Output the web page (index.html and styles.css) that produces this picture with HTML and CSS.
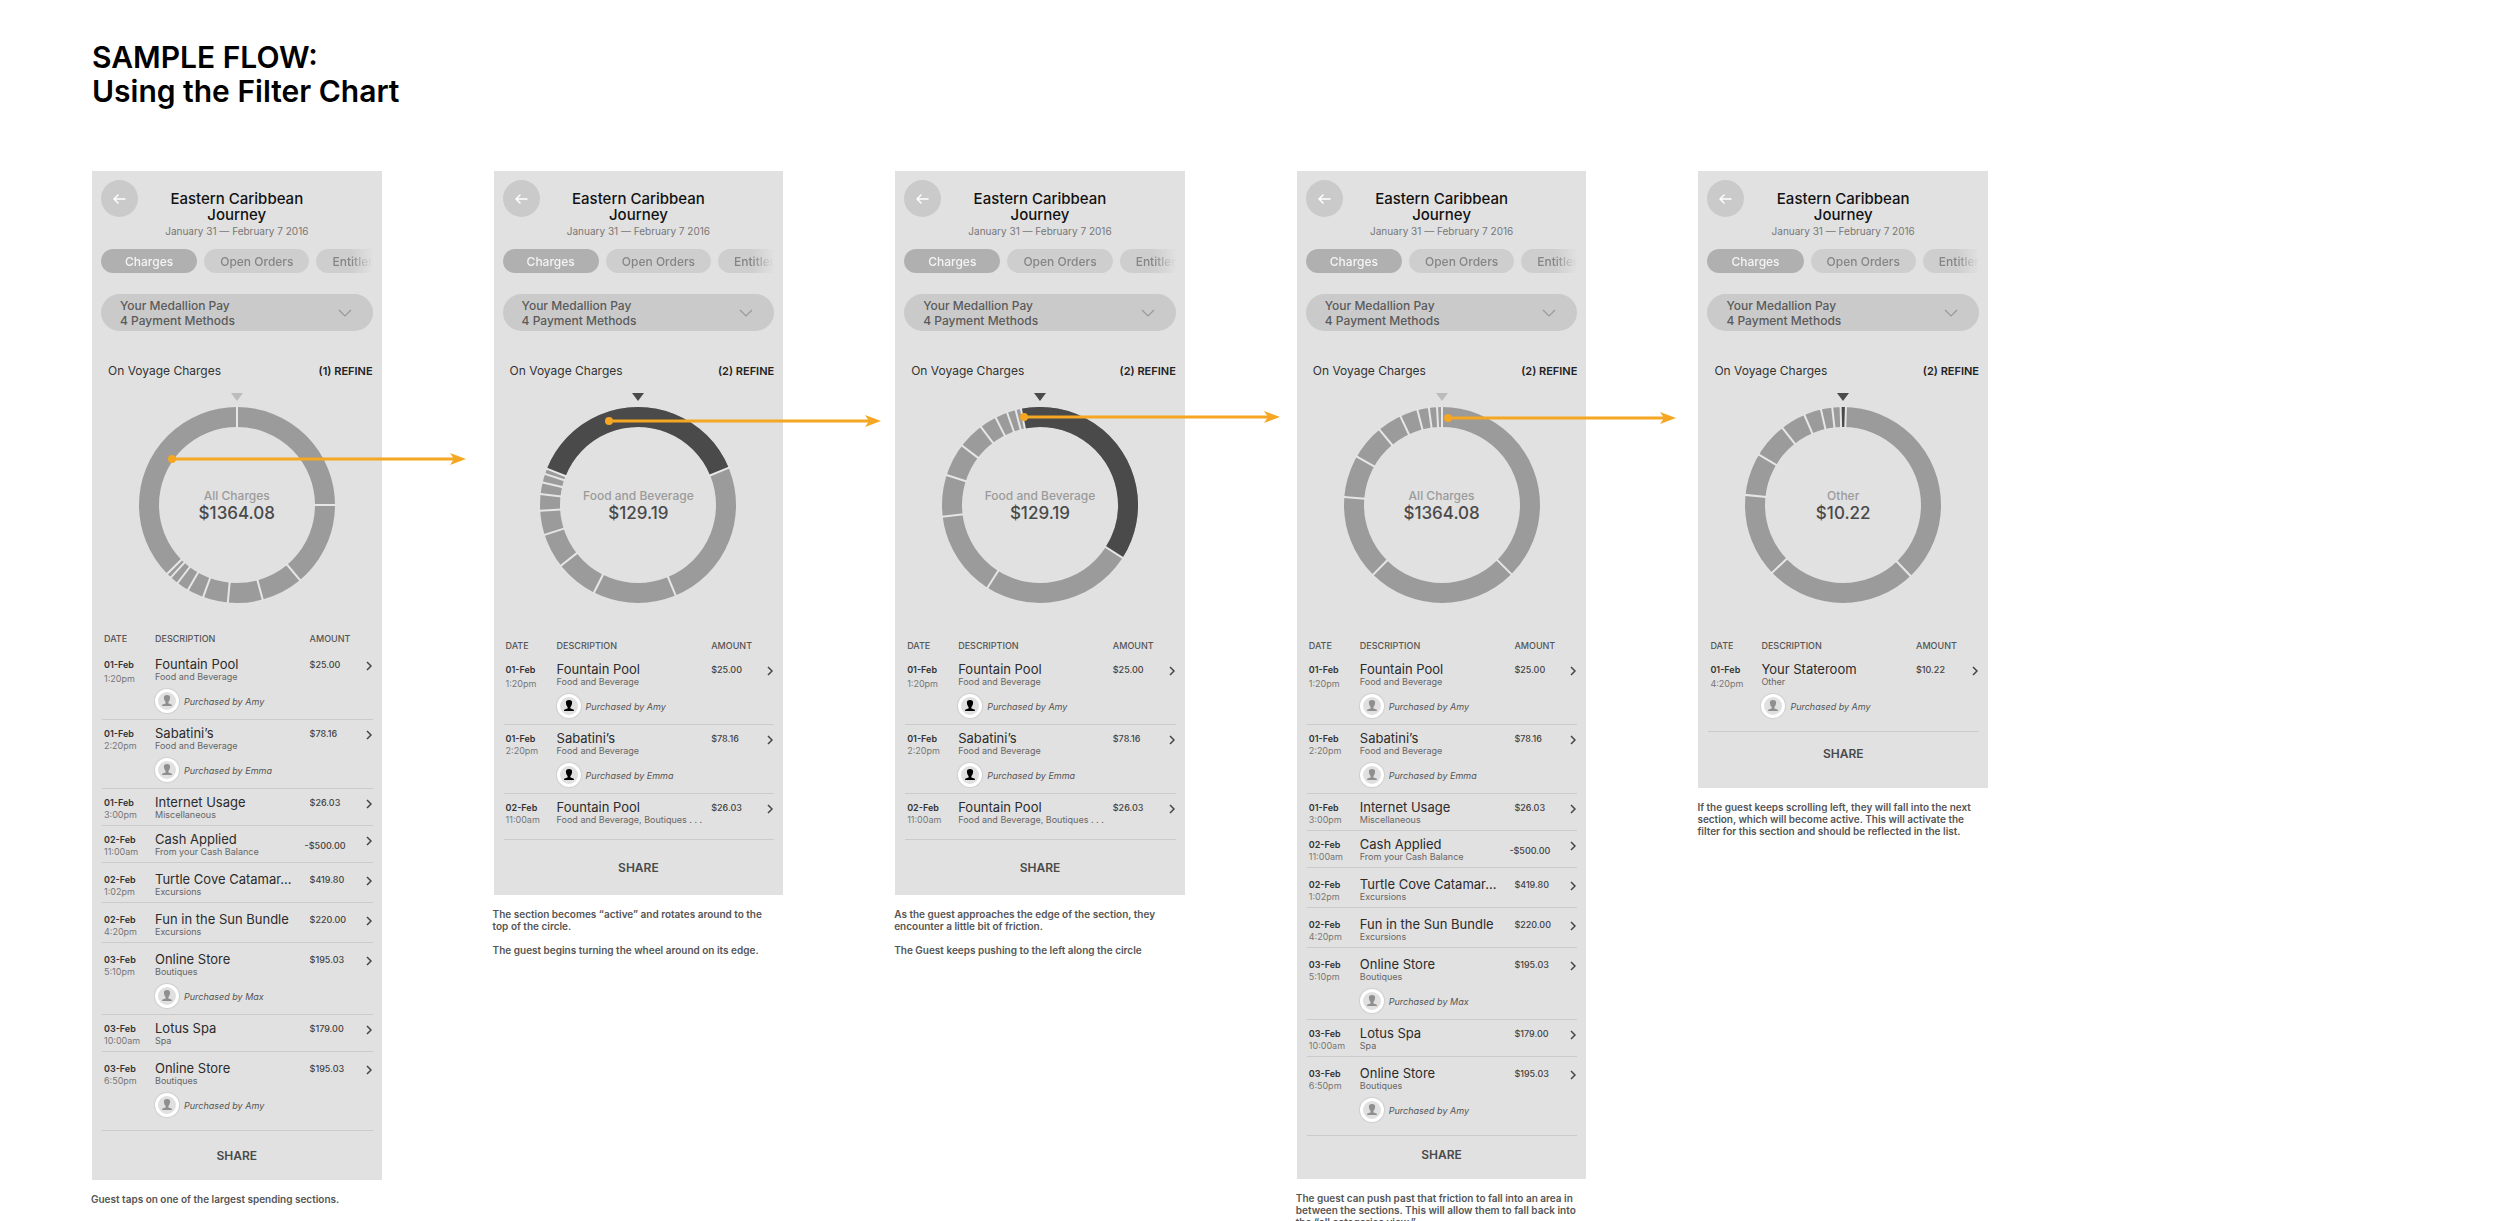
FILE: index.html
```html
<!DOCTYPE html>
<html lang="en">

<head>
    <meta charset="UTF-8">
    <meta name="viewport" content="width=device-width, initial-scale=1.0">
    <title>Sample Flow: Using the Filter Chart</title>
    <link rel="stylesheet" href="styles.css">
</head>

<body>
    <h1>SAMPLE FLOW:<br>Using the Filter Chart</h1>

    <main id="board"></main>

    <script src="flow.js"></script>
</body>

</html>
```

FILE: styles.css
```css
* {
    box-sizing: border-box;
}

html {
    scrollbar-width: none;
}

body {
    margin: 0;
    padding: 40px 512px 0 92px;
    background-color: #fff;
    color: #4a4a4a;
    font-family: Inter, "Liberation Sans", sans-serif;
}

h1 {
    margin: 0 0 63px;
    color: #000;
    font-size: 30px;
    font-weight: 600;
    line-height: 34px;
}

button {
    margin: 0;
    padding: 0;
    border: none;
    background: none;
    color: inherit;
    font-family: inherit;
    cursor: pointer;
}

svg {
    display: block;
}

#board {
    display: grid;
    grid-template-columns: repeat(5, minmax(0, 1fr));
    column-gap: 112px;
    align-items: start;
}

.card {
    position: relative;
    padding: 9px 9px 0;
    background-color: #e1e1e1;
}

/* Card header */
.card-header {
    display: grid;
    grid-template-columns: 37px 1fr 37px;
    margin-bottom: 10px;
}

.back {
    display: flex;
    align-items: center;
    justify-content: center;
    width: 37px;
    height: 37px;
    border-radius: 50%;
    background-color: #cacaca;
}

.trip {
    padding-top: 11px;
    text-align: center;
    white-space: nowrap;
}

.trip h2 {
    margin: 0;
    color: #111;
    font-size: 15px;
    font-weight: 500;
    line-height: 16px;
}

.trip p {
    margin: 0;
    color: #777;
    font-size: 10px;
    line-height: 16px;
}

.tabs {
    display: flex;
    gap: 7px;
    margin-bottom: 21px;
    overflow: hidden;
    -webkit-mask-image: linear-gradient(to right, #000 92%, transparent);
    mask-image: linear-gradient(to right, #000 92%, transparent);
}

.tab {
    flex: none;
    height: 24px;
    padding: 0 16px;
    border-radius: 12px;
    background-color: #cecece;
    color: #858585;
    font-size: 12px;
    font-weight: 500;
}

.tab.active {
    padding: 0 24px;
    background-color: #b0b0b0;
    color: #f4f4f4;
}

.methods {
    display: flex;
    align-items: center;
    justify-content: space-between;
    width: 100%;
    height: 37px;
    margin-bottom: 32px;
    padding: 0 21px 0 19px;
    border-radius: 19px;
    background-color: #cacaca;
    color: #5a5a5a;
    font-size: 12px;
    font-weight: 500;
    line-height: 15px;
    text-align: left;
}

.list-bar {
    display: flex;
    justify-content: space-between;
    margin-bottom: 14px;
    padding-left: 7px;
    line-height: 16px;
}

.list-bar h3 {
    margin: 0;
    color: #333;
    font-size: 12px;
    font-weight: 400;
}

.refine {
    color: #222;
    font-size: 11px;
    font-weight: 600;
    line-height: 16px;
}

/* Donut chart */
.chart {
    position: relative;
    display: flex;
    flex-direction: column;
    align-items: center;
    gap: 6px;
    margin-bottom: 37px;
}

.pointer {
    fill: #bcbcbc;
}

.pointer.active {
    fill: #4a4a4a;
}

.ring {
    fill: none;
    stroke: #9b9b9b;
    stroke-width: 20;
}

.slice {
    fill: none;
    stroke: #4a4a4a;
    stroke-width: 20;
}

.cut {
    stroke: #e6e6e6;
    stroke-width: 2;
}

.total {
    position: absolute;
    top: 94px;
    left: 0;
    width: 100%;
    margin: 0;
    text-align: center;
}

.total span {
    display: block;
    color: #9b9b9b;
    font-size: 12px;
    font-weight: 500;
    line-height: 18px;
}

.total strong {
    display: block;
    font-size: 17px;
    font-weight: 500;
    line-height: 17px;
}

/* Charges table */
table {
    width: calc(100% - 1px);
    margin-left: 1px;
    border-collapse: collapse;
    table-layout: fixed;
    text-align: left;
    white-space: nowrap;
}

th,
td {
    padding: 0;
    vertical-align: top;
}

thead th {
    height: 16px;
    color: #555;
    font-size: 9px;
    font-weight: 500;
    line-height: 12px;
}

.col-date {
    width: 53px;
}

.col-amount {
    width: 56px;
}

.col-open {
    width: 7px;
}

th:first-child,
td:first-child {
    padding-left: 2px;
}

tbody tr {
    height: 37px;
    border-bottom: 1px solid #cbcbcb;
}

tbody td {
    padding-top: 5px;
}

.roomy {
    height: 40px;
}

.roomy td {
    padding-top: 8px;
}

.date,
.time,
.amount {
    display: block;
    padding-top: 3px;
    font-size: 9px;
    line-height: 12px;
}

.date {
    color: #333;
    font-weight: 600;
}

.time {
    padding-top: 0;
    color: #777;
}

tbody tr:first-child .time {
    padding-top: 2px;
}

.amount {
    color: #444;
    font-weight: 500;
}

.amount.credit {
    margin-left: -5px;
    padding-top: 9px;
}

.item {
    display: block;
    color: #2b2b2b;
    font-size: 13px;
    line-height: 16px;
}

.category {
    display: block;
    color: #666;
    font-size: 9px;
    line-height: 10px;
}

.buyer {
    display: flex;
    align-items: center;
    gap: 5px;
    margin: 7px 0 6px;
    color: #555;
    font-size: 9px;
    font-style: italic;
}

.avatar {
    width: 24px;
    height: 24px;
    border: 3px solid #fff;
    border-radius: 50%;
    background-color: #e0e0e0;
    box-shadow: 0 0 1px 1px rgba(0, 0, 0, 0.08);
    fill: #8f8f8f;
}

.filtered .avatar {
    fill: #000;
}

.open {
    display: block;
    padding-top: 5px;
}

tbody tr:last-child td {
    padding-bottom: 7px;
}

.filtered tbody tr:last-child {
    height: 46px;
}

.share {
    display: block;
    width: 100%;
    height: 49px;
    font-size: 12px;
    font-weight: 600;
}

.filtered .share {
    height: 55px;
}

.between .share {
    height: 43px;
    padding-bottom: 6px;
}

.other .share {
    height: 56px;
    padding-bottom: 13px;
}

.start .chart {
    margin-bottom: 30px;
}

.start thead th {
    height: 18px;
}

/* Flow arrows run from a card over the gap to the next one */
.arrow {
    position: absolute;
    z-index: 1;
    fill: #f5a623;
    stroke: #f5a623;
}

.caption {
    margin: 13px 0 0 -1px;
    color: #555;
    font-size: 10px;
    font-weight: 600;
    line-height: 12px;
    white-space: nowrap;
}
```

FILE: flow.js
```js
const charges = [
    ['01-Feb', '1:20pm', 'Fountain Pool', 'Food and Beverage', '$25.00', 'Amy'],
    ['01-Feb', '2:20pm', 'Sabatini’s', 'Food and Beverage', '$78.16', 'Emma'],
    ['01-Feb', '3:00pm', 'Internet Usage', 'Miscellaneous', '$26.03'],
    ['02-Feb', '11:00am', 'Cash Applied', 'From your Cash Balance', '-$500.00'],
    ['02-Feb', '1:02pm', 'Turtle Cove Catamar...', 'Excursions', '$419.80', '', 'roomy'],
    ['02-Feb', '4:20pm', 'Fun in the Sun Bundle', 'Excursions', '$220.00', '', 'roomy'],
    ['03-Feb', '5:10pm', 'Online Store', 'Boutiques', '$195.03', 'Max', 'roomy'],
    ['03-Feb', '10:00am', 'Lotus Spa', 'Spa', '$179.00'],
    ['03-Feb', '6:50pm', 'Online Store', 'Boutiques', '$195.03', 'Amy', 'roomy']
];

const foodCharges = [
    charges[0],
    charges[1],
    ['02-Feb', '11:00am', 'Fountain Pool', 'Food and Beverage, Boutiques . . .', '$26.03']
];

const otherCharges = [
    ['01-Feb', '4:20pm', 'Your Stateroom', 'Other', '$10.22', 'Amy']
];

// cuts and slice are degrees clockwise from the top of the wheel
const steps = [
    {
        name: 'start', refine: 1, label: 'All Charges', total: '$1364.08', rows: charges,
        cuts: [0, 90, 140, 164.8, 185.4, 200.2, 210, 217.3, 222.4, 225.4],
        arrow: { x: 80, y: 288, length: 294 },
        caption: 'Guest taps on one of the largest spending sections.'
    },
    {
        name: 'filtered', refine: 2, label: 'Food and Beverage', total: '$129.19', rows: foodCharges,
        cuts: [67.7, 157.4, 206.7, 231.8, 252.3, 266.7, 276.4, 283.3, 288.5, 291.7],
        slice: [291.7, 136],
        arrow: { x: 115, y: 250, length: 272 },
        caption: 'The section becomes “active” and rotates around to the<br>top of the circle.<br><br>The guest begins turning the wheel around on its edge.'
    },
    {
        name: 'filtered', refine: 2, label: 'Food and Beverage', total: '$129.19', rows: foodCharges,
        cuts: [122.6, 212.4, 263.1, 287.8, 307.3, 322.9, 333.1, 340.4, 345.6, 348.8],
        slice: [348.8, 133.8],
        arrow: { x: 129, y: 246, length: 256 },
        caption: 'As the guest approaches the edge of the section, they<br>encounter a little bit of friction.<br><br>The Guest keeps pushing to the left along the circle'
    },
    {
        name: 'between', refine: 2, label: 'All Charges', total: '$1364.08', rows: charges,
        cuts: [0, 134.9, 224.7, 274.7, 299.6, 320.3, 334.9, 345.5, 352.3, 357.1],
        arrow: { x: 151, y: 247, length: 228 },
        caption: 'The guest can push past that friction to fall into an area in<br>between the sections. This will allow them to fall back into<br>the “all categories view.”'
    },
    {
        name: 'other', refine: 2, label: 'Other', total: '$10.22', rows: otherCharges,
        cuts: [1.7, 136.4, 226.3, 275.9, 300.9, 321.8, 336.8, 347, 353.7, 358.6],
        slice: [358.6, 3.1],
        caption: 'If the guest keeps scrolling left, they will fall into the next<br>section, which will become active. This will activate the<br>filter for this section and should be reflected in the list.'
    }
];

function donut(step) {
    const cuts = step.cuts.map(a => `<line class="cut" y1="-77" y2="-99" transform="rotate(${a})"/>`).join('');
    const slice = step.slice
        ? `<circle class="slice" r="88" pathLength="360" stroke-dasharray="${step.slice[1]} 360" transform="rotate(${step.slice[0] - 90})"/>`
        : '';
    return `
        <div class="chart">
            <svg class="pointer ${step.slice ? 'active' : ''}" width="12" height="8"><path d="M0 0h12L6 8z"/></svg>
            <svg width="196" height="196" viewBox="-98 -98 196 196"><circle class="ring" r="88"/>${slice}${cuts}</svg>
            <p class="total"><span>${step.label}</span><strong>${step.total}</strong></p>
        </div>`;
}

function row([date, time, item, category, amount, buyer, spacing]) {
    const person = buyer ? `
        <span class="buyer">
            <svg class="avatar" viewBox="0 0 18 18"><path d="M9 3c2.200 0 3.200 1 3.100 2.700-.1 1.900-.8 3.400-1.700 4.200v1.500c1.200.5 3.300.7 3.500 1.600v1H4.100v-1c.2-.9 2.300-1.100 3.500-1.600V9.900C6.700 9.100 6 7.600 5.900 5.700 5.800 4 6.800 3 9 3z"/></svg>
            Purchased by ${buyer}
        </span>` : '';
    return `
        <tr class="${spacing || ''}">
            <td><span class="date">${date}</span><span class="time">${time}</span></td>
            <td><span class="item">${item}</span><span class="category">${category}</span>${person}</td>
            <td><span class="amount ${amount[0] === '-' ? 'credit' : ''}">${amount}</span></td>
            <td><button class="open" aria-label="Open ${item}">
                <svg width="6" height="10" fill="none" stroke="#444" stroke-width="1.500"><path d="M1 1l4 4-4 4"/></svg>
            </button></td>
        </tr>`;
}

function arrow(a) {
    const tip = a.length + 4;
    return `
        <svg class="arrow" style="left:${a.x - 4}px;top:${a.y - 6}px" width="${tip}" height="12">
            <circle cx="4" cy="6" r="4" stroke="none"/>
            <path d="M4 6H${tip - 10}" stroke-width="3"/>
            <path d="M${tip} 6l-16-6 4 6-4 6z" stroke="none"/>
        </svg>`;
}

function card(step) {
    return `
        <section>
            <div class="card ${step.name}">
                <div class="card-header">
                    <button class="back" aria-label="Back">
                        <svg width="13" height="10" fill="none" stroke="#fff" stroke-width="1.500" stroke-linecap="round" stroke-linejoin="round"><path d="M12 5H1M5 1L1 5l4 4"/></svg>
                    </button>
                    <div class="trip">
                        <h2>Eastern Caribbean<br>Journey</h2>
                        <p>January 31 — February 7 2016</p>
                    </div>
                </div>
                <div class="tabs">
                    <button class="tab active">Charges</button>
                    <button class="tab">Open Orders</button>
                    <button class="tab">Entitlements</button>
                </div>
                <button class="methods" aria-haspopup="listbox">
                    <span>Your Medallion Pay<br>4 Payment Methods</span>
                    <svg width="14" height="8" fill="none" stroke="#999" stroke-width="1.200"><path d="M1 1l6 6 6-6"/></svg>
                </button>
                <div class="list-bar">
                    <h3>On Voyage Charges</h3>
                    <button class="refine">(${step.refine}) REFINE</button>
                </div>
                ${donut(step)}
                <table>
                    <thead>
                        <tr><th class="col-date">DATE</th><th>DESCRIPTION</th><th class="col-amount">AMOUNT</th><th class="col-open"></th></tr>
                    </thead>
                    <tbody>${step.rows.map(row).join('')}</tbody>
                </table>
                <button class="share">SHARE</button>
                ${step.arrow ? arrow(step.arrow) : ''}
            </div>
            <p class="caption">${step.caption}</p>
        </section>`;
}

document.getElementById('board').innerHTML = steps.map(card).join('');
```
